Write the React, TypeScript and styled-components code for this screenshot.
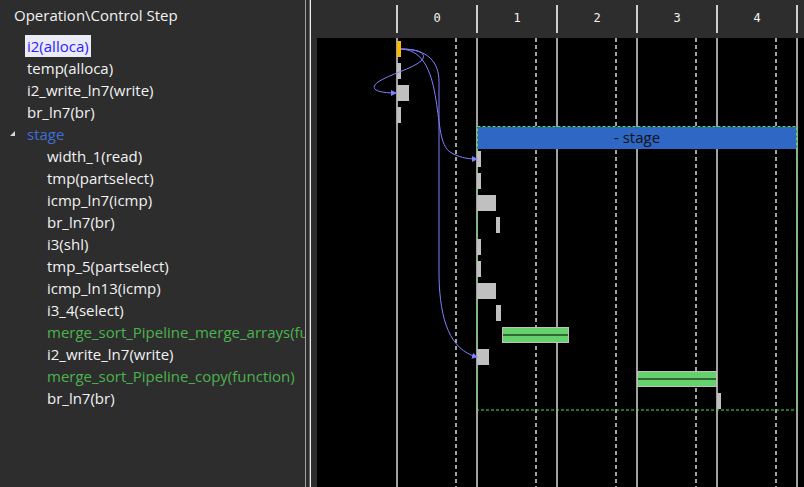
import React from 'react';
import styled, { createGlobalStyle } from 'styled-components';

const GlobalStyle = createGlobalStyle`
  html, body {
    margin: 0;
    padding: 0;
    background: #2d2d2d;
    overflow: hidden;
  }
`;

type Tone = 'normal' | 'selected' | 'stage' | 'func';

interface OpRow {
  label: string;
  level: number;
  tone: Tone;
  expandable?: boolean;
}

const rows: OpRow[] = [
  { label: 'i2(alloca)', level: 0, tone: 'selected' },
  { label: 'temp(alloca)', level: 0, tone: 'normal' },
  { label: 'i2_write_ln7(write)', level: 0, tone: 'normal' },
  { label: 'br_ln7(br)', level: 0, tone: 'normal' },
  { label: 'stage', level: 0, tone: 'stage', expandable: true },
  { label: 'width_1(read)', level: 1, tone: 'normal' },
  { label: 'tmp(partselect)', level: 1, tone: 'normal' },
  { label: 'icmp_ln7(icmp)', level: 1, tone: 'normal' },
  { label: 'br_ln7(br)', level: 1, tone: 'normal' },
  { label: 'i3(shl)', level: 1, tone: 'normal' },
  { label: 'tmp_5(partselect)', level: 1, tone: 'normal' },
  { label: 'icmp_ln13(icmp)', level: 1, tone: 'normal' },
  { label: 'i3_4(select)', level: 1, tone: 'normal' },
  { label: 'merge_sort_Pipeline_merge_arrays(function)', level: 1, tone: 'func' },
  { label: 'i2_write_ln7(write)', level: 1, tone: 'normal' },
  { label: 'merge_sort_Pipeline_copy(function)', level: 1, tone: 'func' },
  { label: 'br_ln7(br)', level: 1, tone: 'normal' },
];

type BarKind = 'op' | 'start' | 'func';
interface Bar {
  row: number;
  x: number;
  w: number;
  kind: BarKind;
}

const bars: Bar[] = [
  { row: 0, x: 397, w: 4, kind: 'start' },
  { row: 1, x: 397, w: 4, kind: 'op' },
  { row: 2, x: 397, w: 12, kind: 'op' },
  { row: 3, x: 397, w: 4, kind: 'op' },
  { row: 5, x: 477, w: 4, kind: 'op' },
  { row: 6, x: 477, w: 4, kind: 'op' },
  { row: 7, x: 477, w: 19, kind: 'op' },
  { row: 8, x: 496, w: 4, kind: 'op' },
  { row: 9, x: 477, w: 4, kind: 'op' },
  { row: 10, x: 477, w: 4, kind: 'op' },
  { row: 11, x: 477, w: 19, kind: 'op' },
  { row: 12, x: 496, w: 5, kind: 'op' },
  { row: 13, x: 502, w: 67, kind: 'func' },
  { row: 14, x: 477, w: 12, kind: 'op' },
  { row: 15, x: 637, w: 80, kind: 'func' },
  { row: 16, x: 717, w: 4, kind: 'op' },
];

const steps = [0, 1, 2, 3, 4];
const ROW_H = 22;
const TOP = 38;
const rowY = (r: number) => TOP + r * ROW_H + 3;

const Window = styled.div`
  display: flex;
  width: 804px;
  height: 487px;
  background: #2d2d2d;
  font-family: 'Open Sans', 'Noto Sans', sans-serif;
  overflow: hidden;
`;

const TreePanel = styled.div`
  width: 305px;
  flex-shrink: 0;
  border-right: 1px solid #a0a0a0;
  overflow: hidden;
`;

const TreeTitle = styled.div`
  height: 35px;
  box-sizing: border-box;
  padding: 4px 0 0 14px;
  line-height: 22px;
  font-size: 15px;
  color: #f2f2f2;
  white-space: nowrap;
`;

const TreeRow = styled.div<{ $level: number }>`
  display: flex;
  align-items: center;
  height: ${ROW_H}px;
  padding-left: ${(p) => 9 + p.$level * 20}px;
  padding-right: 5px;
  white-space: nowrap;
  overflow: hidden;
`;

const Toggle = styled.span`
  width: 16px;
  height: 22px;
  flex-shrink: 0;
  position: relative;
`;

const Caret = styled.span`
  position: absolute;
  left: 1px;
  top: 8px;
  width: 0;
  height: 0;
  border-left: 5px solid transparent;
  border-bottom: 5px solid #d8d8d8;
`;

const toneColor: Record<Tone, string> = {
  normal: '#f2f2f2',
  selected: '#2a1cff',
  stage: '#3d6fd6',
  func: '#4cb34f',
};

const RowLabel = styled.span<{ $tone: Tone }>`
  padding: 0 2px;
  line-height: 22px;
  font-size: 15px;
  color: ${(p) => toneColor[p.$tone]};
  background: ${(p) => (p.$tone === 'selected' ? '#ebebf7' : 'transparent')};
`;

const Splitter = styled.div`
  width: 3px;
  flex-shrink: 0;
  border-right: 1px solid #686868;
`;

const SchedulePanel = styled.div`
  flex: 1;
  display: flex;
  flex-direction: column;
  border-left: 1px solid #ededed;
  padding-left: 6px;
`;

const StepHeader = styled.div`
  display: flex;
  height: 38px;
  box-sizing: border-box;
  padding: 5px 0;
`;

const HeaderSpacer = styled.div`
  width: 79px;
  flex-shrink: 0;
`;

const StepCell = styled.div<{ $last?: boolean }>`
  width: ${(p) => (p.$last ? 82 : 80)}px;
  box-sizing: border-box;
  flex-shrink: 0;
  border-left: 2px solid #cfcfcf;
  border-right: ${(p) => (p.$last ? '2px solid #cfcfcf' : 'none')};
  padding-top: 3px;
  text-align: center;
  font-family: 'DejaVu Sans Mono', monospace;
  font-size: 12px;
  line-height: 20px;
  color: #f4f4f4;
`;

const ScheduleBody = styled.div`
  flex: 1;
  background: #000;
`;

const ChartSvg = styled.svg`
  display: block;
`;

function GanttChart() {
  const solid = [396, 476, 556, 636, 716, 796];
  const dashed = [455, 535, 615, 695, 775];
  return (
    <ChartSvg width={487} height={449} viewBox="317 38 487 449">
      <defs>
        <marker id="arrow" markerWidth="6" markerHeight="6" refX="5" refY="3" orient="auto" markerUnits="userSpaceOnUse">
          <path d="M0,0 L6,3 L0,6 Z" fill="#8080ff" />
        </marker>
      </defs>
      {solid.map((x) => (
        <rect key={`s${x}`} x={x} y={38} width={2} height={449} fill="#a0a0a0" />
      ))}
      {dashed.map((x) => (
        <line key={`d${x}`} x1={x + 1} y1={38} x2={x + 1} y2={487} stroke="#a0a0a0" strokeWidth={2} strokeDasharray="4 3" />
      ))}

      <rect x={477} y={127} width={320} height={22} fill="#2f67c4" />
      <text x={637} y={143} textAnchor="middle" fontFamily="'Open Sans', sans-serif" fontSize={15} fill="#111">
        - stage
      </text>
      <rect x={477.5} y={126.5} width={319} height={283.5} fill="none" stroke="#47e847" strokeWidth={1} strokeDasharray="3 2" />

      {bars.map((b) => {
        const y = rowY(b.row);
        if (b.kind === 'func') {
          return (
            <g key={b.row}>
              <rect x={b.x + 0.5} y={y + 0.5} width={b.w - 1} height={15} fill="#64d16c" stroke="#c0c0c0" />
              <rect x={b.x + 1} y={y + 7.5} width={b.w - 2} height={1} fill="#000" />
            </g>
          );
        }
        return <rect key={b.row} x={b.x} y={y} width={b.w} height={16} fill={b.kind === 'start' ? '#ffb800' : '#c0c0c0'} />;
      })}

      <g fill="none" stroke="#8080ff" strokeWidth={1}>
        <path d="M401,49 C420,49 428,54 421,61 C412,69 390,74 378,82 C370,88 374,93 396,93" markerEnd="url(#arrow)" />
        <path d="M401,49 C425,50 432,75 436,100 C440,125 440,145 450,152 C458,157 466,159 477,159" markerEnd="url(#arrow)" />
        <path d="M401,49 C428,49 439,62 439,82 L439,277 C440,320 450,350 477,357" markerEnd="url(#arrow)" />
      </g>
    </ChartSvg>
  );
}

export default function App() {
  return (
    <Window>
      <GlobalStyle />
      <TreePanel>
        <TreeTitle>Operation\Control Step</TreeTitle>
        {rows.map((r, i) => (
          <TreeRow key={i} $level={r.level}>
            <Toggle>{r.expandable && <Caret />}</Toggle>
            <RowLabel $tone={r.tone}>{r.label}</RowLabel>
          </TreeRow>
        ))}
      </TreePanel>
      <Splitter />
      <SchedulePanel>
        <StepHeader>
          <HeaderSpacer />
          {steps.map((s, i) => (
            <StepCell key={s} $last={i === steps.length - 1}>
              {s}
            </StepCell>
          ))}
        </StepHeader>
        <ScheduleBody>
          <GanttChart />
        </ScheduleBody>
      </SchedulePanel>
    </Window>
  );
}
